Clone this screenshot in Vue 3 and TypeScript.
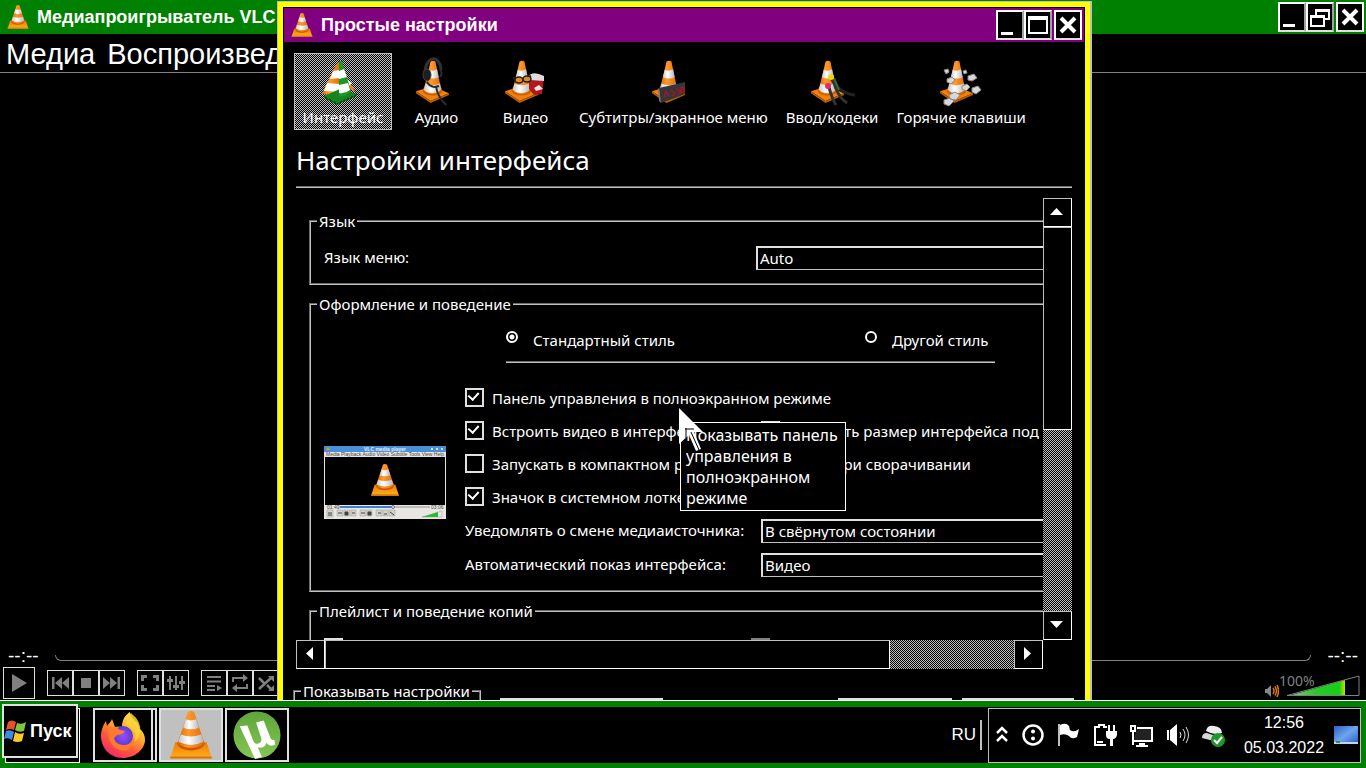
<script setup lang="ts">
import { ref } from 'vue'

interface Category {
  id: string
  label: string
}

const categories: Category[] = [
  { id: 'interface', label: 'Интерфейс' },
  { id: 'audio', label: 'Аудио' },
  { id: 'video', label: 'Видео' },
  { id: 'subs', label: 'Субтитры/экранное меню' },
  { id: 'codecs', label: 'Ввод/кодеки' },
  { id: 'hotkeys', label: 'Горячие клавиши' },
]
const current = ref('interface')
const look = ref('native')

const options = ref([
  { id: 'fsc', label: 'Панель управления в полноэкранном режиме', on: true, wide: true },
  { id: 'embed', label: 'Встроить видео в интерфейс', on: true, wide: false },
  { id: 'resize', label: 'Изменять размер интерфейса под размер видео', on: true, wide: false },
  { id: 'compact', label: 'Запускать в компактном режиме', on: false, wide: false },
  { id: 'pause', label: 'Пауза при сворачивании', on: false, wide: false },
  { id: 'systray', label: 'Значок в системном лотке', on: true, wide: true },
])
</script>

<template>
  <div class="desktop">
    <svg class="defs" aria-hidden="true">
      <defs>
        <linearGradient id="gOrange" x1="0" x2="1"><stop offset="0" stop-color="#d96a00" /><stop offset=".4" stop-color="#ff9a2e" /><stop offset="1" stop-color="#e06c00" /></linearGradient>
        <linearGradient id="gWhite" x1="0" x2="1"><stop offset="0" stop-color="#c4c8cc" /><stop offset=".4" stop-color="#fff" /><stop offset="1" stop-color="#b4b8bc" /></linearGradient>
        <linearGradient id="gBase" x1="0" x2="0" y1="0" y2="1"><stop offset="0" stop-color="#f07c00" /><stop offset="1" stop-color="#ffb020" /></linearGradient>
        <linearGradient id="gVol" x1="0" x2="1"><stop offset="0" stop-color="#7fd07f" /><stop offset=".5" stop-color="#28c828" /><stop offset=".9" stop-color="#14d014" /><stop offset="1" stop-color="#c8e000" /></linearGradient>
        <linearGradient id="gFox" x1=".8" x2=".2" y1="0" y2="1"><stop offset="0" stop-color="#fff04a" /><stop offset=".35" stop-color="#ffb52e" /><stop offset=".65" stop-color="#ff5a3c" /><stop offset="1" stop-color="#f0246a" /></linearGradient>
        <radialGradient id="gGlobe"><stop offset="0" stop-color="#9a4cff" /><stop offset="1" stop-color="#5b3ad0" /></radialGradient>
        <linearGradient id="gDesk" x1="0" x2="1" y1="0" y2="1"><stop offset="0" stop-color="#2d62c8" /><stop offset=".5" stop-color="#6fa4ee" /><stop offset="1" stop-color="#2a5cc0" /></linearGradient>
        <linearGradient id="gMu" x1="0" x2="0" y1="0" y2="1"><stop offset="0" stop-color="#5fa53a" /><stop offset="1" stop-color="#85c654" /></linearGradient>
      </defs>
      <symbol id="cone" viewBox="0 0 40 46">
        <path d="M5 30h30l5 15.500H0z" fill="url(#gBase)" />
        <path d="M0 43.500h40v2H0z" fill="#d87400" />
        <path d="M7 31l2-5h22l2 5c0 9-26 9-26 0z" fill="#c85c00" />
        <path d="M17 1q3-2 6 0l9.500 29c-1 7-24 7-25 0z" fill="url(#gOrange)" />
        <path d="M15 8q5 2 10 0l2.600 8q-7.500 3-15.200 0z" fill="url(#gWhite)" />
        <path d="M10.300 22.500q9.700 4 19.400 0l2.400 7q-12 6-24.200 0z" fill="url(#gWhite)" />
      </symbol>
      <symbol id="pcone" viewBox="0 0 36 44">
        <path d="M1 32l17-5 17 7-19 8z" fill="#f08010" />
        <path d="M1 32l15 10 19-8v2l-19 8L1 34z" fill="#c05c00" />
        <path d="M8 32l1-4h18l1 4c-2 6-18 6-20 0z" fill="#d06000" />
        <path d="M16 1.500q2.500-1.500 5 0l6 29c-3 5-15 6-18 0z" fill="url(#gOrange)" />
        <path d="M14.200 10q4.200 2 8.500-.500l1.700 8q-6 3-12.200 0z" fill="url(#gWhite)" />
        <path d="M10.700 24q7.500 3.500 15 0l1.300 6c-4 5-14 5-18 .500z" fill="url(#gWhite)" />
      </symbol>
    </svg>

    <div class="workspace">
      <section class="player">
        <header class="titlebar green">
          <svg class="logo"><use href="#cone" /></svg>
          <h1>Медиапроигрыватель VLC</h1>
          <div class="winbtns">
            <button aria-label="Свернуть"><svg viewBox="0 0 24 26"><path d="M3 20h12v3H3z" fill="#fff" /></svg></button>
            <button aria-label="Восстановить"><svg viewBox="0 0 24 26"><path d="M8 13V6h13v9h-4M3 12h13v10H3z" fill="none" stroke="#fff" stroke-width="2" /><path d="M7 5h15v3H7zM2 11h15v3H2z" fill="#fff" /></svg></button>
            <button class="close" aria-label="Закрыть"><svg viewBox="0 0 24 26"><path d="M5 6l14 14M19 6L5 20" stroke="#fff" stroke-width="4" /></svg></button>
          </div>
        </header>
        <nav class="menu"><a href="#media">Медиа</a><a href="#playback">Воспроизведение</a></nav>
        <div class="stage"></div>
        <div class="seek"><span>--:--</span><div class="groove"></div><span>--:--</span></div>
        <div class="controls">
          <button class="play" aria-label="Воспроизвести"><svg viewBox="0 0 30 30"><path d="M8 6l15 9-15 9z" fill="#808080" /></svg></button>
          <div class="group">
            <button aria-label="Предыдущий"><svg viewBox="0 0 24 24"><path d="M4 6h2.500v12H4zM14 6v12l-7-6zM21 6v12l-7-6z" fill="#808080" /></svg></button>
            <button aria-label="Стоп"><svg viewBox="0 0 24 24"><path d="M7 7h10v10H7z" fill="#808080" /></svg></button>
            <button aria-label="Следующий"><svg viewBox="0 0 24 24"><path d="M20 6h-2.500v12H20zM10 6v12l7-6zM3 6v12l7-6z" fill="#808080" /></svg></button>
          </div>
          <div class="group">
            <button aria-label="Полный экран"><svg viewBox="0 0 24 24"><path d="M9 5.500H4.500V10M15 5.500h4.500V10M9 18.500H4.500V14M15 18.500h4.500V14" fill="none" stroke="#808080" stroke-width="3" /></svg></button>
            <button aria-label="Эффекты"><svg viewBox="0 0 24 24"><path d="M6 5v14M12 5v14M18 5v14" stroke="#808080" stroke-width="2" /><path d="M3 8h6v3H3zM9 14h6v3H9zM15 10h6v3h-6z" fill="#808080" /></svg></button>
          </div>
          <div class="group">
            <button aria-label="Плейлист"><svg viewBox="0 0 24 24"><path d="M5 6h14M5 10.500h14M5 15h8M5 19h8" stroke="#808080" stroke-width="2" /><path d="M15 14l5 3-5 3z" fill="#808080" /></svg></button>
            <button aria-label="Повтор"><svg viewBox="0 0 24 24"><path d="M5 11V7h11M19 13v4H8" fill="none" stroke="#808080" stroke-width="2" /><path d="M15 3l5 4-5 4zM9 13l-5 4 5 4z" fill="#808080" /></svg></button>
            <button aria-label="Случайно"><svg viewBox="0 0 24 24"><path d="M5 7l5 5M13 14l4 4M5 18L17 7" fill="none" stroke="#808080" stroke-width="2.500" /><path d="M14 5h6v6zM14 20h6v-6z" fill="#808080" /></svg></button>
          </div>
          <div class="volume">
            <svg class="spk" viewBox="0 0 14 12"><path d="M0 4h2l4-4v12L2 8H0z" fill="#888" /><path d="M8 3q2 3 0 6M10 1.500q3 4.500 0 9M12 0q3 6 0 12" fill="none" stroke="#e07800" stroke-width="1.500" /></svg>
            <svg class="ramp" viewBox="0 0 74 22"><path d="M2 21L59 5v16z" fill="url(#gVol)" /><path d="M1 20.500L73 1v19.500z" fill="none" stroke="#808080" /></svg>
            <span>100%</span>
          </div>
        </div>
      </section>

      <section class="dialog">
        <header class="titlebar purple">
          <svg class="logo"><use href="#cone" /></svg>
          <h2>Простые настройки</h2>
          <div class="winbtns">
            <button aria-label="Свернуть"><svg viewBox="0 0 24 26"><path d="M3 20h12v3H3z" fill="#fff" /></svg></button>
            <button aria-label="Развернуть"><svg viewBox="0 0 24 26"><path d="M3 5h18v16H3z" fill="none" stroke="#fff" stroke-width="2" /><path d="M2 4h20v4H2z" fill="#fff" /></svg></button>
            <button class="close" aria-label="Закрыть"><svg viewBox="0 0 24 26"><path d="M5 6l14 14M19 6L5 20" stroke="#fff" stroke-width="4" /></svg></button>
          </div>
        </header>

        <div class="toolbar">
          <button v-for="c in categories" :key="c.id" class="cat" :class="{ active: current === c.id }" @click="current = c.id">
            <svg class="caticon" viewBox="5 0 50 50">
              <template v-if="c.id === 'interface'">
                <path d="M32 18l11 17-9-4z" fill="#e87c18" />
                <path d="M34 22l5 4-3 3z" fill="#fff" />
                <path d="M24 6q2-2 3-1v34l-18-2q1-3 2-5z" fill="url(#gOrange)" />
                <path d="M20 14l7-1v8l-10 1zM14 26l13 1v8l-16-1z" fill="#fff" />
                <path d="M11 39l16-7 17 5-20 9z" fill="#15861f" />
                <path d="M11 39l13 7 20-9v2l-20 9-13-7z" fill="#0a5c12" />
                <path d="M26 4h3l9 30q-5 7-12 5z" fill="#1d962a" />
                <path d="M26 14l5-2 3 8-8 2zM26 28l9-2 2 7q-5 4-11 3z" fill="#fff" />
              </template>
              <template v-else>
                <use href="#pcone" x="8" y="3" width="35" height="43" />
                <g v-if="c.id === 'audio'" fill="none">
                  <path d="M18 17C18 -2 33-3 34 13" stroke="#303234" stroke-width="3" />
                  <ellipse cx="20" cy="18" rx="4" ry="6" fill="#1c1e20" stroke="#444" />
                  <path d="M33 12q3 5 0 8M20 25q4 7 12 4M29 29q1 10 10 19" stroke="#2a2c2e" stroke-width="2" />
                </g>
                <g v-else-if="c.id === 'video'">
                  <path d="M33 20l15 1-2 16-8 1-5-6z" fill="#b01820" />
                  <path d="M32 20q4-7 16-1v5l-14-1z" fill="#ddd" />
                  <path d="M38 31l5-3 4 4-7 2z" fill="#f4dede" />
                  <path d="M17 21l5 2 5-1 8-3" fill="none" stroke="#202020" stroke-width="2" />
                  <ellipse cx="23" cy="23" rx="4" ry="3" fill="#e08a28" stroke="#202020" stroke-width="1.500" />
                  <ellipse cx="31" cy="22" rx="4" ry="3" fill="#e08a28" stroke="#202020" stroke-width="1.500" />
                </g>
                <g v-else-if="c.id === 'subs'">
                  <path d="M16 31l26-6v12l-24 9z" fill="#34363a" />
                  <path d="M16 31l2 15-2-2-1-12z" fill="#77797c" />
                  <path d="M21 41l2-7 3 5M28 33l4 3-3 3M33 31l4 3-2 4M38 31l3-1v5l-3 1z" fill="none" stroke="#a51622" stroke-width="1.500" />
                </g>
                <g v-else-if="c.id === 'codecs'" fill="none">
                  <path d="M29 21q9 16 24 17" stroke="#202224" stroke-width="3" />
                  <path d="M31 22q4 18 14 24M27 30q3 12 7 18" stroke="#303234" stroke-width="3" />
                  <path d="M32 21l5 12" stroke="#356d38" stroke-width="2" />
                  <circle cx="29" cy="20" r="3" fill="#e8d814" />
                  <circle cx="26" cy="29" r="3" fill="#e8286c" />
                </g>
                <g v-else fill="#d8d8d8" stroke="#888" stroke-width="1">
                  <path d="M13 13l4-1 1 3-3 2zM32 14l3-1 1 3-3 1zM37 19l6-2 3 4-5 3-4-1zM16 22l5-2 3 3-4 4-4-2zM31 29l5-2 3 3-4 4-4-2zM41 31l6-2 3 4-5 4-4-2zM18 38l6-3 5 3-4 5-6-1zM13 43l6-2 4 3-5 5-5-2z" />
                </g>
              </template>
            </svg>
            <span>{{ c.label }}</span>
          </button>
        </div>

        <h3 class="heading">Настройки интерфейса</h3>

        <div class="scroller">
          <div class="viewport">
            <div class="content">
              <fieldset class="lang">
                <legend>Язык</legend>
                <label for="lang">Язык меню:</label>
                <select id="lang"><option>Auto</option></select>
              </fieldset>

              <fieldset class="behave">
                <legend>Оформление и поведение</legend>
                <div class="radios">
                  <label><input v-model="look" type="radio" name="look" value="native" />Стандартный стиль</label>
                  <label><input v-model="look" type="radio" name="look" value="skin" />Другой стиль</label>
                </div>
                <div class="columns">
                  <svg class="preview" viewBox="0 0 122 73">
                    <path d="M0 0h122v73H0z" fill="#e8e6e2" />
                    <path d="M0 0h122v6H0z" fill="#4a90d8" />
                    <path d="M2 4l2-3 2 3z" fill="#ff9020" />
                    <text x="40" y="5" class="tiny light">VLC media player</text>
                    <path d="M107 2h2v2h-2zM112 2h2v2h-2zM117 2h2v2h-2z" fill="#cfe2f6" />
                    <text x="2" y="10" class="tiny">Media Playback Audio Video Subtitle Tools View Help</text>
                    <path d="M1 11h120v48H1z" fill="#000" />
                    <use href="#cone" x="47" y="18" width="28" height="32" />
                    <text x="3" y="63" class="tiny">01:49</text>
                    <text x="107" y="63" class="tiny">03:06</text>
                    <path d="M16 60h90v2H16z" fill="#bbb" />
                    <path d="M16 60h53v2H16z" fill="#3a80d0" />
                    <circle cx="69" cy="61" r="1.500" fill="#ddd" stroke="#777" />
                    <path d="M3 64h6v7H3zM13 64h6v6h-6zM20 64h6v6h-6zM27 64h5v6h-5zM36 64h6v6h-6zM43 64h5v6h-5zM52 64h6v6h-6zM59 64h5v6h-5zM65 64h6v6h-6z" fill="#d4d2ce" stroke="#999" stroke-width=".5" />
                    <path d="M5 66v4M7 66v4M14 67h4M21 66h3v3h-3zM28 67h3M37 67h4M44 66h3v3h-3zM54 67h3M60 68h3M66 66l4 3" stroke="#444" fill="#444" />
                    <path d="M98 71l16-5v5z" fill="#1cc01c" /><path d="M98 71l20-6v6z" fill="none" stroke="#999" stroke-width=".5" />
                  </svg>
                  <div class="settings">
                    <label v-for="o in options" :key="o.id" class="check" :class="{ wide: o.wide }">
                      <input v-model="o.on" type="checkbox" /><span>{{ o.label }}</span>
                    </label>
                    <label class="cell" for="notify">Уведомлять о смене медиаисточника:</label>
                    <div class="cell"><select id="notify"><option>В свёрнутом состоянии</option></select></div>
                    <label class="cell" for="raise">Автоматический показ интерфейса:</label>
                    <div class="cell"><select id="raise"><option>Видео</option></select></div>
                  </div>
                </div>
              </fieldset>

              <fieldset class="playlist">
                <legend>Плейлист и поведение копий</legend>
                <input type="checkbox" aria-label="Только одна копия" />
                <input type="checkbox" class="dim" aria-label="Одна копия при запуске из файла" />
              </fieldset>
            </div>
          </div>
          <div class="vbar">
            <button aria-label="Вверх"><svg viewBox="0 0 27 27"><path d="M6 16h13l-6.500-7z" fill="#fff" /></svg></button>
            <div class="thumb"></div>
            <div class="track"></div>
            <button aria-label="Вниз"><svg viewBox="0 0 27 27"><path d="M6 9h13l-6.500 7z" fill="#fff" /></svg></button>
          </div>
          <div class="hbar">
            <button aria-label="Влево"><svg viewBox="0 0 27 27"><path d="M16 6v13l-7-6.500z" fill="#fff" /></svg></button>
            <div class="thumb"></div>
            <div class="track"></div>
            <button aria-label="Вправо"><svg viewBox="0 0 27 27"><path d="M9 6v13l7-6.500z" fill="#fff" /></svg></button>
          </div>
        </div>

        <footer class="bottom">
          <fieldset><legend>Показывать настройки</legend></fieldset>
          <button class="reset" aria-label="Сброс настроек"></button>
          <button class="save" aria-label="Сохранить"></button>
          <button class="cancel" aria-label="Отмена"></button>
        </footer>

        <div class="tooltip" role="tooltip">Показывать панель управления в полноэкранном режиме</div>
        <svg class="cursor" viewBox="0 0 26 44"><path d="M0 0l24 24h-9l7 17-5 2-7-16-10 9z" fill="#fff" /><path d="M6 21h9M7 20v10M12 24l8 18" stroke="#000" stroke-width="1" fill="none" /></svg>
      </section>
    </div>

    <footer class="taskbar">
      <div class="bar">
        <div class="startwrap">
          <button class="start">
            <svg viewBox="0 0 24 22"><path d="M4 2q4-3 8 0l-2 8q-4-2-8 0z" fill="#e8502c" /><path d="M13 3q5 2 9-1l-2 9q-5 2-9-1z" fill="#82c43c" /><path d="M2 11q4-2 8 1l-2 8q-4-3-8-1z" fill="#3c8ce0" /><path d="M11 12q4 3 9 1l-2 8q-5 2-9 0z" fill="#fcc82c" /></svg>
            Пуск
          </button>
        </div>
        <div class="tasks">
          <button class="task stacked" aria-label="Firefox">
            <svg viewBox="0 0 46 48">
              <path d="M23 47C9 47 1 36 1 25 1 18 4 13 6 10l1 5c2-3 4-4 5-7l3 8q3-1 7 0c0-7 3-12 8-15 0 6 5 8 8 12l1 4q6 5 6 12C45 38 35 47 23 47z" fill="url(#gFox)" />
              <circle cx="23" cy="25" r="10" fill="url(#gGlobe)" />
              <path d="M8 17q7-3 12 2l5 1q-2 4-8 4l-3 3q1 6 9 7 8 0 11-6c1 10-8 13-14 11C11 37 7 26 8 17z" fill="#ff7a2c" />
              <path d="M26 13q13 6 8 18 5-3 6-10 2-10-9-19-5 4-5 11z" fill="#ffd43c" opacity=".85" />
            </svg>
          </button>
          <button class="task active" aria-label="VLC"><svg viewBox="0 0 40 46"><use href="#cone" /></svg></button>
          <button class="task" aria-label="uTorrent">
            <svg viewBox="0 0 50 50"><circle cx="25" cy="25" r="24.500" fill="url(#gMu)" /><path d="M7 16l8-1 6 16q2 4 5 3 5-1 3-7l-5-15 8-2 7 18q1 3 4 2l1 5q-6 3-9-2-2 6-9 5l4 10-7 2z" fill="#fff" /></svg>
          </button>
        </div>
        <div class="lang-ind">RU</div>
        <div class="tray">
          <svg class="chev" viewBox="0 0 12 20"><path d="M1 8l5-5 5 5M1 16l5-5 5 5" fill="none" stroke="#fff" stroke-width="2.500" /></svg>
          <svg class="ti" viewBox="0 0 24 24"><circle cx="12" cy="12" r="9.500" fill="none" stroke="#fff" stroke-width="2.500" /><circle cx="12" cy="8.500" r="2" fill="#fff" /><circle cx="12" cy="15.500" r="2" fill="#fff" /></svg>
          <svg class="ti" viewBox="0 0 24 24"><path d="M2 1v22" stroke="#fff" stroke-width="1.500" /><path d="M3 2q6-3 9 1l1 4q4 3 9-1l-2 8q-5 3-8-1-4-3-9-1z" fill="#fff" /></svg>
          <svg class="ti" viewBox="0 0 24 24"><path d="M13 22H2V4h4V2h5v2h3" fill="none" stroke="#fff" stroke-width="2" /><path d="M4 18h6v2H4z" fill="#fff" /><path d="M13 8h11v4q-1 4-4 4v7h-3v-7q-4 0-4-4zM15 2h2v6h-2zM20 2h2v6h-2z" fill="#fff" /></svg>
          <svg class="ti" viewBox="0 0 24 24"><path d="M8 5h15v13H4" fill="#222" stroke="#fff" stroke-width="2" /><path d="M10 20h6v2h3v2H7v-2h3zM1 2h6v7H5v13H3V9H1z" fill="#fff" /><path d="M3 4h2v3H3z" fill="#000" /></svg>
          <svg class="ti" viewBox="0 0 24 24"><path d="M2 7h2v10H2zM5 7l7-6v22l-7-6z" fill="#fff" /><path d="M15 9q2 3 0 6M18 6q4 6 0 12M21 4q5 8 0 16" fill="none" stroke="#ddd" /></svg>
          <svg class="ti" viewBox="0 0 24 24"><path d="M5 8q1-6 8-5 8 1 8 7-7 3-16-2z" fill="#eee" /><path d="M1 15q0-5 5-5 6 3 15 2 0 6-8 6z" fill="#d8d8d8" /><circle cx="17" cy="17" r="7" fill="#22962e" /><path d="M13 17l3 3 5-6" fill="none" stroke="#fff" stroke-width="2" /></svg>
          <time class="clock"><span>12:56</span><span>05.03.2022</span></time>
          <svg class="desk" viewBox="0 0 24 18"><path d="M0 0h24v18H0z" fill="url(#gDesk)" /><path d="M0 16h24v2H0z" fill="#bcd4f6" /><path d="M2 15h4v2H2z" fill="#3a9040" /></svg>
        </div>
      </div>
    </footer>
  </div>
</template>

<style>
html, body { background: #000; }
</style>

<style scoped>
* { box-sizing: border-box; }
.desktop {
  display: flex; flex-direction: column; height: 100vh; overflow: hidden;
  background: #000; color: #fff;
  font: 15px/22px "Noto Sans", "Open Sans", sans-serif;
}
button, select, input { font: inherit; color: inherit; margin: 0; }
button { background: #000; padding: 0; border: 0; cursor: pointer; }
svg { display: block; flex: none; }
.defs { position: absolute; width: 0; height: 0; }
.workspace { flex: 1; min-height: 0; position: relative; overflow: hidden; }

.titlebar { display: flex; align-items: center; height: 34px; padding-right: 2px; }
.green { background: #008000; }
.purple { background: #800080; }
.logo { width: 22px; height: 24px; margin: 0 8px 0 7px; }
h1, h2 { flex: 1; margin: 0; font: bold 18px/24px "Liberation Sans", Arial, sans-serif; white-space: nowrap; }
.winbtns { display: flex; }
.winbtns button { width: 28px; height: 30px; border: 2px solid #fff; border-right-color: #a0a0a0; border-bottom-color: #e0e0e0; outline: 0; }
.winbtns svg { width: 24px; height: 26px; }
.winbtns .close { margin-left: 2px; border-right-color: #fff; }

.player { height: 100%; display: flex; flex-direction: column; }
.menu { display: flex; gap: 12px; height: 39px; padding-left: 6px; border-bottom: 1px solid #808080; font: 29px/40px "Liberation Sans", Arial, sans-serif; }
.menu a { color: #fff; text-decoration: none; }
.stage { flex: 1; }
.seek { display: flex; align-items: center; gap: 16px; height: 20px; padding: 0 8px; font: 19px/22px "Liberation Sans", Arial, sans-serif; }
.groove { flex: 1; height: 6px; margin-top: 4px; border: 1px solid #808080; border-top: 0; border-radius: 0 0 6px 6px; }
.controls { display: flex; align-items: center; gap: 12px; height: 34px; padding: 0 6px 1px 3px; }
.controls button { width: 26px; height: 26px; border: 1px solid #e0e0e0; }
.controls button svg { width: 24px; height: 24px; }
.controls .play { width: 32px; height: 32px; }
.controls .play svg { width: 30px; height: 30px; }
.group { display: flex; }
.volume { margin: 6px 0 0 auto; display: flex; align-items: flex-end; gap: 7px; position: relative; color: #808080; }
.spk { width: 14px; height: 12px; }
.ramp { width: 74px; height: 22px; }
.volume span { position: absolute; left: 14px; bottom: 7px; font: 14px/18px "Noto Sans", sans-serif; }

.dialog {
  position: absolute; left: 277px; right: 274px; top: 1px; height: 800px;
  border: 1px solid #c0c0c0; border-right: 2px solid #c0c0c0;
  background: #000; box-shadow: inset 0 0 0 5px #ff0; padding: 6px 6px 0;
  display: flex; flex-direction: column;
}
.toolbar { display: flex; padding: 11px 10px 0; }
.cat { min-width: 89px; height: 77px; padding: 3px 8px 0; border: 1px solid transparent; background: none; display: flex; flex-direction: column; align-items: center; white-space: nowrap; line-height: 20px; }
.cat.active { border-color: #c0c0c0; width: 98px; background: repeating-conic-gradient(#c0c0c0 0 25%, #000 0 50%) 0 0 / 2px 2px; }
.caticon { width: 50px; height: 50px; }
.heading { margin: 12px 12px 0; height: 46px; border-bottom: 2px groove #c0c0c0; font-weight: 400; font-size: 26px; line-height: 36px; white-space: nowrap; }

.scroller { margin: 10px 12px 0; display: grid; grid-template: 442px 29px / 1fr 29px; }
.viewport { overflow: hidden; }
.content { width: 120%; padding: 12px 13px 0; }
fieldset { margin: 0 0 8px; padding: 0 13px; border: 2px groove #c0c0c0; min-width: 0; }
legend { padding: 0 2px; margin-left: -7px; }
.lang { height: 75px; padding-top: 14px; display: grid; grid-template-columns: 432px 1fr; align-items: start; }
.lang label { line-height: 22px; }
select { appearance: none; display: block; width: 100%; height: 24px; padding: 0 2px 2px; border: 1px solid #c0c0c0; border-top: 2px solid #e0e0e0; border-left: 2px solid #e0e0e0; border-radius: 0; background: #000; line-height: 18px; }
.behave { height: 299px; padding-top: 15px; }
.radios { display: grid; grid-template-columns: 359px 130px; width: 489px; height: 33px; margin: 0 0 19px 182px; border-bottom: 2px groove #c0c0c0; white-space: nowrap; line-height: 20px; }
.radios label { display: flex; align-items: flex-start; gap: 15px; }
input { appearance: none; flex: none; border-radius: 0; background: #000; }
input[type="radio"] { width: 12px; height: 12px; margin-top: 1px; border: 2px solid #fff; border-radius: 50%; }
input[type="radio"]:checked { background: radial-gradient(circle, #fff 2px, #000 3px); }
input[type="checkbox"] { width: 19px; height: 19px; border: 2px solid #e0e0e0; position: relative; }
input[type="checkbox"]:checked::after { content: ""; position: absolute; left: 3px; top: 0; width: 5px; height: 8px; border: solid #fff; border-width: 0 2px 2px 0; transform: rotate(42deg); }
.columns { display: flex; align-items: center; gap: 19px; }
.preview { width: 122px; height: 73px; }
.tiny { font: 5px "Liberation Sans", sans-serif; fill: #444; }
.light { fill: #e4eefa; font-weight: bold; }
.settings { flex: 1; display: grid; grid-template-columns: 296px 1fr; grid-template-rows: repeat(4, 33px) repeat(2, 34px); white-space: nowrap; min-width: 0; }
.check, .cell { display: flex; align-items: center; min-width: 0; }
.check { gap: 8px; }
.check input { margin-bottom: 2px; }
.check span, label.cell { padding-bottom: 2px; }
.wide { grid-column: 1 / -1; }
.playlist { height: 90px; padding-top: 16px; display: grid; grid-template-columns: 427px 1fr; }
.playlist .dim { border-color: #808080; }

.vbar { display: flex; flex-direction: column; }
.hbar { display: flex; }
.vbar button, .hbar button { width: 29px; height: 29px; flex: none; }
.vbar button, .hbar button, .thumb { background: #000; border: 1px solid #c0c0c0; border-right-color: #fff; border-bottom-color: #fff; }
.vbar .thumb { flex: 202; }
.vbar .track { flex: 182; }
.hbar .thumb { flex: 565; }
.hbar .track { flex: 124; }
.track { background: repeating-conic-gradient(#c0c0c0 0 25%, #000 0 50%) 0 0 / 2px 2px; }

.bottom { display: flex; margin: 11px 10px 0 9px; }
.bottom fieldset { width: 188px; height: 70px; padding: 0 7px; margin-right: 19px; white-space: nowrap; }
.bottom legend { margin-left: -1px; }
.bottom button { height: 30px; margin-top: 18px; border: 2px solid #e0e0e0; }
.reset { width: 163px; }
.save { width: 114px; margin-left: auto; }
.cancel { width: 112px; margin-left: 10px; }

.tooltip { position: absolute; left: 402px; top: 420px; width: 166px; padding: 2px 5px 1px; border: 1px solid #fff; background: #000; font-size: 16px; line-height: 21px; }
.cursor { position: absolute; left: 401px; top: 406px; width: 26px; height: 44px; }

.taskbar { height: 68px; flex: none; padding: 6px 5px 5px; border-top: 1px solid #fff; background: #008000; position: relative; font-family: "Liberation Sans", Arial, sans-serif; font-size: 16px; }
.bar { display: flex; align-items: center; height: 100%; background: #000; }
.startwrap { width: 75px; height: 55px; border: 1px solid #fff; position: relative; }
.start { position: absolute; left: -4px; top: -5px; width: 76px; height: 54px; border: 2px solid #e0e0e0; display: flex; align-items: center; gap: 2px; font-size: 18px; font-weight: bold; }
.start svg { width: 24px; height: 22px; }
.tasks { display: flex; gap: 2px; margin-left: 13px; flex: 1; }
.task { width: 64px; height: 54px; border: 2px solid #e0e0e0; display: flex; align-items: center; justify-content: center; }
.task svg { width: 50px; height: 48px; }
.stacked { padding-right: 4px; background: linear-gradient(to left, #000 2px, #e0e0e0 2px 4px, #000 4px); }
.task.active { background: #c0c0c0; }
.lang-ind { padding-right: 4px; border-right: 2px solid #c0c0c0; font-size: 17px; line-height: 30px; }
.tray { margin-left: 6px; height: 55px; border: 1px solid #c0c0c0; display: flex; align-items: center; padding: 0 2px 0 7px; }
.chev { width: 12px; height: 20px; margin-right: 13px; }
.ti { width: 24px; height: 24px; margin-right: 12px; }
.clock { display: flex; flex-direction: column; align-items: center; width: 96px; margin-left: -1px; line-height: 25px; }
.desk { width: 24px; height: 18px; margin-left: 2px; }
</style>
